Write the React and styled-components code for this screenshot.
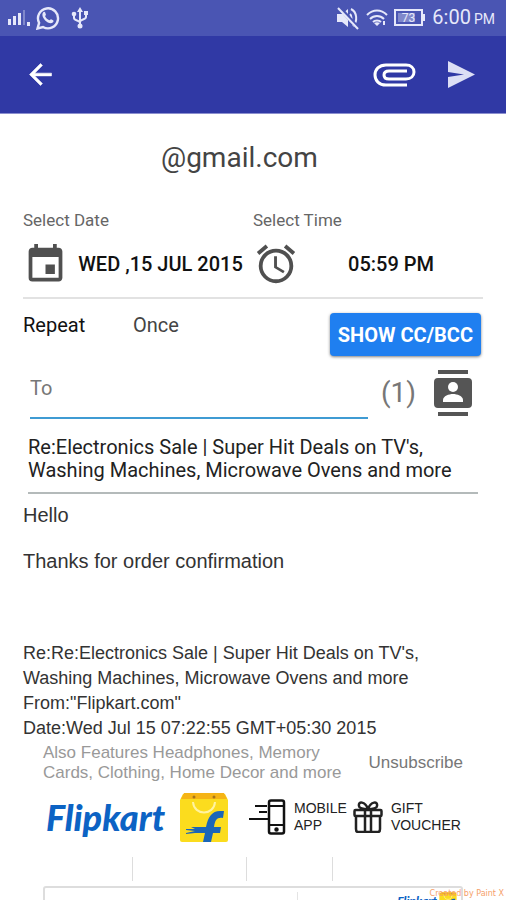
import React from 'react';
import styled, {createGlobalStyle} from 'styled-components';

const GlobalStyle = createGlobalStyle`
  * {
    box-sizing: border-box;
  }
  body {
    margin: 0;
    background: #fff;
    font-family: Roboto, "Liberation Sans", sans-serif;
  }
  button, input, textarea, select {
    font: inherit;
    color: inherit;
    margin: 0;
    padding: 0;
    border: none;
    border-radius: 0;
    background: none;
    outline: none;
  }
  button {
    cursor: pointer;
  }
  svg {
    display: block;
    flex: none;
  }
`;

const Screen = styled.div`
  position: relative;
  height: 100vh;
  overflow: hidden;
  background: #fff;
`;

const StatusBar = styled.header`
  display: flex;
  align-items: center;
  justify-content: space-between;
  height: 36px;
  padding: 0 11px 0 8px;
  background: #4a55b3;
  color: #e6e8fa;
`;

const StatusGroup = styled.div`
  display: flex;
  align-items: center;
  gap: ${props => props.$gap}px;
`;

const Clock = styled.span`
  display: flex;
  align-items: baseline;
  font-size: 20px;
  line-height: 24px;
  gap: 3px;
`;

const Meridiem = styled.small`
  font-size: 14px;
`;

const Toolbar = styled.nav`
  display: flex;
  align-items: center;
  justify-content: space-between;
  height: 78px;
  padding: 0 31px 0 24px;
  background: #3039a5;
  border-bottom: 1px solid #8b8fcf;
  color: #fff;
`;

const ToolbarActions = styled.div`
  display: flex;
  align-items: center;
  gap: 32px;
`;

const Compose = styled.form`
  padding: 27px 23px 0;
`;

const Account = styled.h1`
  margin: 0;
  padding-left: 138px;
  font-size: 28px;
  font-weight: 400;
  line-height: 34px;
  color: #444;
`;

const Schedule = styled.div`
  display: grid;
  grid-template-columns: 1fr 1fr;
  margin-top: 33px;
  padding-bottom: 11px;
  border-bottom: 2px solid #e2e2e2;
`;

const PickerLabel = styled.label`
  display: block;
  font-size: 17px;
  line-height: 24px;
  color: #666;
`;

const Picker = styled.button`
  display: flex;
  align-items: center;
  width: 100%;
  height: 44px;
  margin-top: 10px;
  font-size: 20px;
  font-weight: 500;
  white-space: nowrap;
  color: #111;
`;

const PickerValue = styled.span`
  flex: 1;
  text-align: center;
`;

const RepeatRow = styled.div`
  display: flex;
  align-items: flex-start;
  padding: 12px 2px 0 0;
  font-size: 20px;
  line-height: 28px;
  color: #111;
`;

const RepeatLabel = styled.label`
  width: 110px;
`;

const RepeatSelect = styled.select`
  flex: 1;
  appearance: none;
  color: #444;
`;

const CcButton = styled.button`
  height: 43px;
  margin-top: 2px;
  padding: 0 8px;
  border-radius: 4px;
  background: #1f7ff0;
  box-shadow: 0 1px 3px rgba(0, 0, 0, 0.5);
  color: #fff;
  font-size: 20px;
  font-weight: 700;
`;

const ToRow = styled.div`
  display: flex;
  align-items: center;
  padding: 11px 11px 0 7px;
`;

const ToInput = styled.input`
  flex: 1;
  min-width: 0;
  height: 52px;
  padding-bottom: 8px;
  border-bottom: 2px solid #3f9bd3;
  font-size: 20px;

  &::placeholder {
    color: #777;
    opacity: 1;
  }
`;

const Count = styled.span`
  padding: 0 18px 0 13px;
  font-size: 28px;
  line-height: 36px;
  color: #777;
`;

const Subject = styled.textarea`
  display: block;
  width: calc(100% - 10px);
  height: 75px;
  margin-left: 5px;
  padding-top: 17px;
  border-bottom: 2px solid #b4baba;
  resize: none;
  overflow: hidden;
  font-size: 20px;
  line-height: 23px;
  color: #222;
`;

const Body = styled.textarea`
  display: block;
  width: 100%;
  height: 137px;
  margin-top: 10px;
  resize: none;
  overflow: hidden;
  font-family: "Liberation Sans", sans-serif;
  font-size: 20px;
  line-height: 23px;
  color: #333;
`;

const Quote = styled.section`
  font-family: "Liberation Sans", sans-serif;
`;

const QuoteHead = styled.p`
  margin: 0;
  font-size: 18px;
  line-height: 25px;
  color: #333;
`;

const Newsletter = styled.div`
  padding: 2px 20px 0;
`;

const PreheaderRow = styled.div`
  display: flex;
  align-items: center;
  justify-content: space-between;
`;

const Preheader = styled.p`
  width: 304px;
  margin: 0;
  font-size: 17px;
  line-height: 20px;
  color: #999;
`;

const Unsubscribe = styled.a`
  font-size: 17px;
  line-height: 20px;
  color: #777;
  text-decoration: none;
`;

const BrandRow = styled.div`
  display: flex;
  align-items: center;
  height: 50px;
  margin-top: 9px;
`;

const Brand = styled.a`
  display: flex;
  align-items: center;
  gap: ${props => props.$small ? 2 : 14}px;
  padding-left: 3px;
  font-family: Lato, sans-serif;
  font-size: ${props => props.$small ? 12 : 36}px;
  font-style: italic;
  font-weight: 900;
  line-height: 1;
  color: #0c63c4;
  text-decoration: none;
`;

const Promo = styled.a`
  display: flex;
  align-items: center;
  gap: 8px;
  margin-left: ${props => props.$left}px;
  font-size: 14px;
  line-height: 17px;
  color: #222;
  text-decoration: none;
`;

const Categories = styled.div`
  display: grid;
  grid-template-columns: 90px 114px 86px 1fr;
  height: 24px;
  margin-top: 15px;
`;

const Category = styled.span`
  border-right: ${props => props.$last ? 'none' : '1px solid #ddd'};
`;

const Card = styled.div`
  display: flex;
  justify-content: space-between;
  align-items: flex-start;
  height: 80px;
  margin-top: 5px;
  padding: 4px 4px 0;
  border: 2px solid #ddd;
  border-radius: 3px;
`;

const CardCell = styled.div`
  width: 61%;
  height: 60px;
  border-right: 1px solid #e4e4e4;
`;

const Credit = styled.small`
  position: absolute;
  right: 2px;
  bottom: 1px;
  font-family: "DejaVu Sans", sans-serif;
  font-size: 8px;
  line-height: 10px;
  color: #f5a06a;
`;

const SignalIcon = () => (
  <svg width="23" height="20" viewBox="0 0 23 20" fill="currentColor">
    <path d="M0 11h3v6H0zM5 8h3v9H5zM10 5h3v12h-3zM19 14h3v4h-3z"/>
    <path d="M15 2h2v15h-2z" opacity=".35"/>
  </svg>
);

const WhatsappIcon = () => (
  <svg width="24" height="24" viewBox="0 0 24 24">
    <path d="M1.500 22.500l1.600-5.600A10 10 0 1 1 7 21z" fill="none" stroke="currentColor" strokeWidth="2.400"/>
    <path d="M7.300 6.300c.8-.8 1.600-.5 1.900.3l.7 1.800c.2.7-.9 1.300-.8 1.800.8 1.800 2.400 3.300 4.300 4 .6.1 1-1.200 1.700-1l2 1c.8.4.5 1.800-.4 2.400-2.100 1.500-5.400-.1-7.500-2.200C7.200 12.400 5.200 8.500 7.300 6.300z" fill="currentColor"/>
  </svg>
);

const UsbIcon = () => (
  <svg width="18" height="22" viewBox="0 0 18 22" fill="none" stroke="currentColor" strokeWidth="2">
    <path d="M9 3v17M3 8v3c0 3 6 2 6 5M15 6v4c0 3-6 2-6 5"/>
    <path d="M9 0l3 5H6zM13 4h4v4h-4z" fill="currentColor" stroke="none"/>
    <circle cx="3" cy="7" r="2.300" fill="currentColor" stroke="none"/>
    <circle cx="9" cy="19" r="2.500" fill="currentColor" stroke="none"/>
  </svg>
);

const MutedIcon = () => (
  <svg width="24" height="24" viewBox="0 0 24 24" fill="none" stroke="currentColor" strokeWidth="2">
    <path d="M1 8h5l6-5v18l-6-5H1z" fill="currentColor" stroke="none"/>
    <path d="M14 8c2 2 2 6 0 8M15 3c6 3 7 12 2 17"/>
    <path d="M3 1l20 22" stroke="#4a55b3" strokeWidth="4"/>
    <path d="M2 2l20 21"/>
  </svg>
);

const WifiIcon = () => (
  <svg width="22" height="18" viewBox="0 0 22 18" fill="none" stroke="currentColor" strokeWidth="2">
    <path d="M1 6c6-6 14-6 20 0M4 10c4-4 10-4 14 0M7 13c2-2 6-2 8 0"/>
    <path d="M8 14l3 3 3-3c-2-1-4-1-6 0zM17 12h2v4h-2z" fill="currentColor" stroke="none"/>
  </svg>
);

const BatteryIcon = () => (
  <svg width="32" height="18" viewBox="0 0 32 18">
    <rect x="1" y="1" width="27" height="15" fill="none" stroke="currentColor" strokeWidth="2"/>
    <path d="M4 4h17v9H4z" fill="currentColor" opacity=".35"/>
    <path d="M29 5h2v7h-2z" fill="currentColor"/>
    <text x="14.500" y="13" textAnchor="middle" fontFamily="Roboto" fontSize="12" fill="currentColor">73</text>
  </svg>
);

const BackIcon = () => (
  <svg width="33" height="33" viewBox="0 0 24 24" fill="currentColor" stroke="currentColor" strokeWidth=".4">
    <path d="M20 11H7.830l5.590-5.590L12 4l-8 8 8 8 1.410-1.410L7.830 13H20v-2z"/>
  </svg>
);

const ClipIcon = () => (
  <svg width="43" height="24" viewBox="0 0 43 24" fill="none" stroke="currentColor" strokeWidth="3">
    <path d="M34 22H13C6 22 2 17.500 2 12S6 2 13 2h20c5 0 8 3 8 7s-3 7-8 7H16c-3 0-5-1.500-5-4s2-4 5-4h18"/>
  </svg>
);

const SendIcon = () => (
  <svg width="27" height="27" viewBox="0 0 27 27" fill="#dcdff5">
    <path d="M0 0l27 13.500L0 27V16l16-2.500L0 11z"/>
  </svg>
);

const CalendarIcon = () => (
  <svg width="45" height="45" viewBox="0 0 24 24" fill="#505050">
    <path d="M17 12h-5v5h5v-5zM16 1v2H8V1H6v2H5c-1.110 0-1.990.9-1.990 2L3 19a2 2 0 0 0 2 2h14c1.100 0 2-.9 2-2V5c0-1.100-.9-2-2-2h-1V1h-2zm3 18H5V8h14v11z"/>
  </svg>
);

const AlarmIcon = () => (
  <svg width="46" height="46" viewBox="0 0 24 24" fill="#505050">
    <path d="M22 5.720l-4.600-3.860-1.290 1.530 4.600 3.860L22 5.720zM7.880 3.390L6.600 1.860 2 5.710l1.290 1.530 4.590-3.850zM12.500 8H11v6l4.750 2.850.75-1.230-4-2.370V8zM12 4a9 9 0 1 0 0 18 9 9 0 0 0 0-18zm0 16a7 7 0 1 1 0-14 7 7 0 0 1 0 14z"/>
  </svg>
);

const ContactsIcon = () => (
  <svg width="38" height="46" viewBox="0 0 38 46" fill="#555">
    <path d="M4 0h30v4H4zM4 42h30v4H4zM4 8h30a4 4 0 0 1 4 4v22a4 4 0 0 1-4 4H4a4 4 0 0 1-4-4V12a4 4 0 0 1 4-4z"/>
    <circle cx="19" cy="17" r="5" fill="#fff"/>
    <path d="M9 32v-2c0-4 6-6 10-6s10 2 10 6v2z" fill="#fff"/>
  </svg>
);

const BagIcon = ({size = 50}) => (
  <svg width={size} height={size} viewBox="0 0 50 50">
    <path d="M4 2h42l3 6v40a2 2 0 0 1-2 2H3a2 2 0 0 1-2-2V8z" fill="#fbdc1e"/>
    <path d="M5 1h40l3 6H2z" fill="#f5b416"/>
    <path d="M14 10c1 14 21 14 22 0" fill="none" stroke="#fff3a0" strokeWidth="2"/>
    <circle cx="15" cy="5" r="1.500" fill="#a5751c"/>
    <circle cx="35" cy="5" r="1.500" fill="#a5751c"/>
    <path d="M24 50l2-9H16l-9 1v-1l9-2-9-1v-1h9l-4-2h15c2-10 6-16 14-16h4l-1 7c-6-1-8 2-9 9h7l-1 6h-7l-2 9z" fill="#1b66b8"/>
  </svg>
);

const MobileIcon = () => (
  <svg width="37" height="36" viewBox="0 0 37 36" fill="none" stroke="#111" strokeWidth="2.500">
    <rect x="20" y="1.500" width="15" height="33" rx="2"/>
    <path d="M20 7h15M20 26h15M6 7h12M10 13h8M0 20h19" strokeWidth="2.200"/>
    <circle cx="27.500" cy="30.500" r="1" fill="#111"/>
  </svg>
);

const GiftIcon = () => (
  <svg width="30" height="32" viewBox="0 0 30 32" fill="none" stroke="#222" strokeWidth="2.500">
    <rect x="1.500" y="9" width="27" height="6" rx="1"/>
    <path d="M3 15v13c0 2 1 3 2 3h20c1 0 2-1 2-3V15M12 9v22M18 9v22M15 8c-3-8-10-8-9-3 0 2 4 3 9 3zM15 8c3-8 10-8 9-3 0 2-4 3-9 3z"/>
  </svg>
);

class App extends React.Component {
  constructor(props) {
    super(props);
    this.state = {
      to: '',
      subject: "Re:Electronics Sale | Super Hit Deals on TV's,\nWashing Machines, Microwave Ovens and more",
      body: 'Hello\n\nThanks for order confirmation'
    }
  }

  onChange = (e) => {
    this.setState({[e.target.name]: e.target.value});
  }

  render() {
    return (
      <Screen>
        <GlobalStyle/>
        <StatusBar>
          <StatusGroup $gap={11}>
            <StatusGroup $gap={5}>
              <SignalIcon/>
              <WhatsappIcon/>
            </StatusGroup>
            <UsbIcon/>
          </StatusGroup>
          <StatusGroup $gap={6}>
            <MutedIcon/>
            <WifiIcon/>
            <BatteryIcon/>
            <Clock>6:00<Meridiem>PM</Meridiem></Clock>
          </StatusGroup>
        </StatusBar>
        <Toolbar>
          <button type='button' aria-label='Back'><BackIcon/></button>
          <ToolbarActions>
            <button type='button' aria-label='Attach file'><ClipIcon/></button>
            <button type='submit' form='compose' aria-label='Send'><SendIcon/></button>
          </ToolbarActions>
        </Toolbar>
        <Compose id='compose' onSubmit={e => e.preventDefault()}>
          <Account>@gmail.com</Account>
          <Schedule>
            <div>
              <PickerLabel htmlFor='date'>Select Date</PickerLabel>
              <Picker id='date' type='button'>
                <CalendarIcon/>
                <PickerValue>WED ,15 JUL 2015</PickerValue>
              </Picker>
            </div>
            <div>
              <PickerLabel htmlFor='time'>Select Time</PickerLabel>
              <Picker id='time' type='button'>
                <AlarmIcon/>
                <PickerValue>05:59 PM</PickerValue>
              </Picker>
            </div>
          </Schedule>
          <RepeatRow>
            <RepeatLabel htmlFor='repeat'>Repeat</RepeatLabel>
            <RepeatSelect id='repeat'>
              <option>Once</option>
            </RepeatSelect>
            <CcButton type='button'>SHOW CC/BCC</CcButton>
          </RepeatRow>
          <ToRow>
            <ToInput name='to' aria-label='To' placeholder='To' value={this.state.to} onChange={this.onChange}/>
            <Count>(1)</Count>
            <button type='button' aria-label='Contacts'><ContactsIcon/></button>
          </ToRow>
          <Subject name='subject' aria-label='Subject' value={this.state.subject} onChange={this.onChange}/>
          <Body name='body' aria-label='Message' value={this.state.body} onChange={this.onChange}/>
          <Quote>
            <QuoteHead>
              Re:Re:Electronics Sale | Super Hit Deals on TV's,<br/>
              Washing Machines, Microwave Ovens and more<br/>
              From:"Flipkart.com"<br/>
              Date:Wed Jul 15 07:22:55 GMT+05:30 2015
            </QuoteHead>
            <Newsletter>
              <PreheaderRow>
                <Preheader>Also Features Headphones, Memory Cards, Clothing, Home Decor and more</Preheader>
                <Unsubscribe href='#unsubscribe'>Unsubscribe</Unsubscribe>
              </PreheaderRow>
              <BrandRow>
                <Brand href='#flipkart'>Flipkart<BagIcon/></Brand>
                <Promo href='#app' $left={20}><MobileIcon/><span>MOBILE<br/>APP</span></Promo>
                <Promo href='#gift' $left={6}><GiftIcon/><span>GIFT<br/>VOUCHER</span></Promo>
              </BrandRow>
              <Categories>
                <Category/>
                <Category/>
                <Category/>
                <Category $last/>
              </Categories>
              <Card>
                <CardCell/>
                <Brand href='#flipkart' $small>Flipkart<BagIcon size={18}/></Brand>
              </Card>
            </Newsletter>
          </Quote>
        </Compose>
        <Credit>Created by Paint X</Credit>
      </Screen>
    )
  }
}

export default App;
